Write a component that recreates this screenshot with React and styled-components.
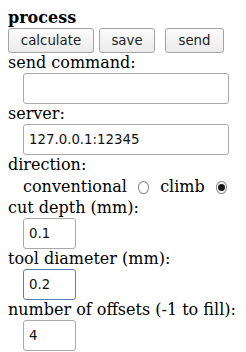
import React from "react";
import styled, { createGlobalStyle } from "styled-components";

const GlobalStyle = createGlobalStyle`
  body {
    margin: 8px;
    font-family: "DejaVu Serif", serif;
    font-size: 16px;
    color: #000;
    background: #fff;
  }
`;

const Panel = styled.div`
  display: flex;
  flex-direction: column;
`;

const Title = styled.div`
  font-weight: bold;
  font-size: 16px;
  line-height: 20px;
`;

const ButtonRow = styled.div`
  display: flex;
  height: 25px;
`;

const Button = styled.button`
  font-family: "DejaVu Sans", sans-serif;
  font-size: 13.33px;
  height: 25px;
  width: ${({ w }) => w}px;
  margin-left: ${({ gap }) => gap || 0}px;
  padding: 0;
  border: 1px solid #a3a3a3;
  border-radius: 3px;
  background: linear-gradient(#fbfbfb, #ececec);
  color: #222;
`;

const Label = styled.div`
  line-height: 20px;
  height: 20px;
`;

const Field = styled.input`
  box-sizing: border-box;
  margin-left: 15px;
  width: ${({ w }) => w}px;
  height: 31px;
  padding: 0 5px;
  font-family: "DejaVu Sans", sans-serif;
  font-size: 13.33px;
  color: #111;
  border: 1px solid ${({ focus }) => (focus ? "#5b7fb2" : "#a9a9a9")};
  border-radius: 3px;
  background: #fff;
  outline: none;
`;

const RadioRow = styled.div`
  display: flex;
  align-items: center;
  height: 23px;
  padding-left: 15px;
`;

const RadioText = styled.span`
  line-height: 23px;
`;

const Radio = styled.span`
  box-sizing: border-box;
  width: 13px;
  height: 13px;
  border-radius: 50%;
  border: 1px solid #8a8a8a;
  background: #fff;
  margin: 1px 11px 0 11px;
  display: flex;
  align-items: center;
  justify-content: center;
  &::after {
    content: "";
    width: 7px;
    height: 7px;
    border-radius: 50%;
    background: ${({ checked }) => (checked ? "#1a1a1a" : "transparent")};
  }
`;

export default function App() {
  return (
    <Panel>
      <GlobalStyle />
      <Title>process</Title>
      <ButtonRow>
        <Button w={86}>calculate</Button>
        <Button w={56} gap={5}>save</Button>
        <Button w={59} gap={10}>send</Button>
      </ButtonRow>
      <Label>send command:</Label>
      <Field w={206} defaultValue="" />
      <Label>server:</Label>
      <Field w={206} defaultValue="127.0.0.1:12345" />
      <Label>direction:</Label>
      <RadioRow>
        <RadioText>conventional</RadioText>
        <Radio />
        <RadioText>climb</RadioText>
        <Radio checked />
      </RadioRow>
      <Label>cut depth (mm):</Label>
      <Field w={53} defaultValue="0.1" />
      <Label>tool diameter (mm):</Label>
      <Field w={53} defaultValue="0.2" focus />
      <Label>number of offsets (-1 to fill):</Label>
      <Field w={53} defaultValue="4" />
    </Panel>
  );
}
